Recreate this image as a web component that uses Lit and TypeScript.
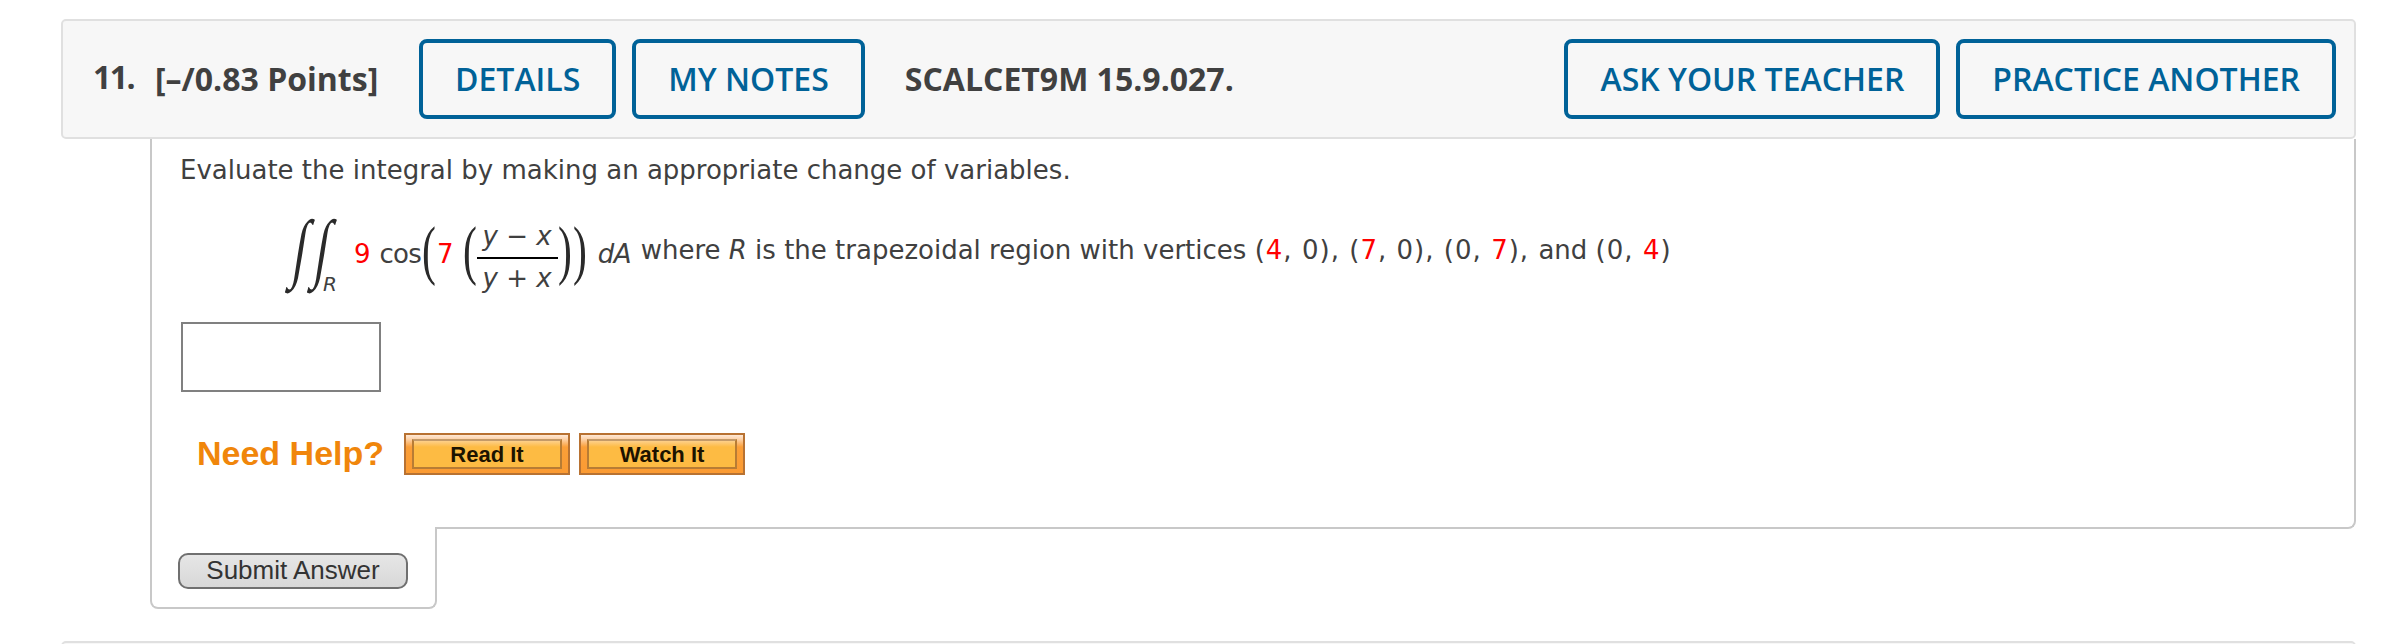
import { LitElement, html, css } from "lit";
import { customElement, property } from "lit/decorators.js";

@customElement("header-button")
class HeaderButton extends LitElement {
  @property() label = "";
  static styles = css`
    :host { display: block; }
    .btn {
      box-sizing: border-box;
      display: block;
      height: 80px;
      margin: 0;
      padding: 0 32px;
      border: 4px solid #006298;
      border-radius: 8px;
      background: #f7f7f7;
      color: #006298;
      font: 600 32px/72px "Open Sans", sans-serif;
      white-space: nowrap;
    }
  `;
  render() {
    return html`<button class="btn">${this.label}</button>`;
  }
}

@customElement("help-button")
class HelpButton extends LitElement {
  @property() label = "";
  static styles = css`
    :host { display: block; }
    .btn {
      box-sizing: border-box;
      display: block;
      width: 166px;
      height: 42px;
      margin: 0;
      padding: 4px 6px;
      border: 2px solid #b87232;
      background: linear-gradient(#fee9d6 0, #fdd3ab 4px, #fb9f38 12px, #fb9b33 100%);
    }
    .face {
      box-sizing: border-box;
      display: block;
      height: 30px;
      border: 2px solid #b87c34;
      border-top-color: #c39a68;
      background: linear-gradient(#fdd08a 0, #fdbb43 6px);
      color: #1c1300;
      font: bold 22px/27px "Liberation Sans", Arial, sans-serif;
      text-align: center;
      white-space: nowrap;
    }
  `;
  render() {
    return html`<button class="btn"><span class="face">${this.label}</span></button>`;
  }
}

@customElement("app-root")
class AppRoot extends LitElement {
  static styles = css`
    :host {
      display: block;
      box-sizing: border-box;
      height: 644px;
      overflow: hidden;
      padding: 19px 32px 0 61px;
      background: #fff;
      color: #404040;
      font: 26px/30px "DejaVu Sans", Verdana, sans-serif;
    }
    .header {
      box-sizing: border-box;
      display: flex;
      align-items: center;
      height: 120px;
      padding: 0 18px 0 31px;
      border: 2px solid #e0e0e0;
      border-radius: 5px;
      background: #f7f7f7;
      font: 700 32px/72px "Open Sans", sans-serif;
      white-space: nowrap;
    }
    .number { width: 62px; margin-left: -1px; padding-bottom: 4px; letter-spacing: -1.6px; }
    .points { width: 264px; }
    .group { display: flex; gap: 16px; }
    .code { flex: 1; padding-left: 40px; }
    .content {
      box-sizing: border-box;
      height: 390px;
      margin-left: 89px;
      padding: 16px 28px 0;
      border: 2px solid #c8c8c8;
      border-top: 0;
      border-radius: 0 0 8px 0;
    }
    .prompt { margin: 0; white-space: nowrap; }
    .math {
      display: flex;
      align-items: flex-start;
      height: 80px;
      margin: 31px 0 0 105px;
      line-height: 76px;
      white-space: nowrap;
    }
    .red { color: #f00; }
    .integral, .paren {
      display: flex;
      justify-content: center;
      align-items: center;
      height: 68px;
      color: #2a2a2a;
      font-family: "Liberation Serif", "Times New Roman", serif;
    }
    .integral { width: 32px; height: 62px; font-size: 68px; }
    .integral span { transform: skewX(-9deg) scale(0.72, 1.12); }
    .second { margin-left: -10px; }
    .paren { width: 12px; font-size: 65px; }
    .paren span { transform: scaleX(0.64); }
    .sub { margin: 57px 0 0 -16px; font-size: 20px; line-height: 22px; }
    .nine { margin-left: 17px; }
    .cos { margin-left: 9px; letter-spacing: -0.7px; }
    .open { margin-left: 2px; }
    .seven { margin-left: 2px; }
    .inner { margin-left: 10px; }
    .fraction {
      display: grid;
      grid-template-rows: 36px 2px 34px;
      width: 81px;
      margin: 5px 0 0 1px;
      line-height: 30px;
      text-align: center;
    }
    .bar { background: #000; }
    .denominator { padding-top: 4px; }
    .close { margin-left: 1px; }
    .outer { margin-left: 3px; }
    .da { margin-left: 12px; width: 43px; letter-spacing: -0.3px; }
    .where { line-height: 68px; }
    .tuple { letter-spacing: 1.02px; }
    .answer {
      box-sizing: border-box;
      display: block;
      width: 200px;
      height: 70px;
      margin: 26px 0 0 1px;
      padding: 0 8px;
      border: 2px solid #808080;
      border-radius: 0;
      background: #fff;
      outline: none;
    }
    .help { display: flex; gap: 9px; margin-top: 41px; }
    .help-title {
      width: 215px;
      padding-left: 17px;
      box-sizing: border-box;
      color: #f0860b;
      font: bold 34px/40px "Liberation Sans", Arial, sans-serif;
      white-space: nowrap;
    }
    .tab {
      box-sizing: border-box;
      width: 287px;
      height: 82px;
      margin: -2px 0 0 89px;
      padding: 26px 26px 0;
      border: 2px solid #c8c8c8;
      border-top: 0;
      border-radius: 0 0 8px 8px;
      background: #fff;
    }
    .submit {
      box-sizing: border-box;
      display: block;
      width: 230px;
      height: 36px;
      margin: 0;
      padding: 0 0 2px;
      border: 2px solid #707070;
      border-radius: 10px;
      background: linear-gradient(#e6e6e6, #d8d8d8);
      color: #333;
      font: 26px/30px "Liberation Sans", Arial, sans-serif;
      white-space: nowrap;
    }
    .next { height: 120px; margin-top: 32px; border: 2px solid #e0e0e0; border-radius: 5px; background: #f7f7f7; }
  `;

  render() {
    const red = (n: number) => html`<span class="red">${n}</span>`;
    return html`
      <div class="header">
        <span class="number">11.</span>
        <span class="points">[–/0.83 Points]</span>
        <div class="group">
          <header-button label="DETAILS"></header-button>
          <header-button label="MY NOTES"></header-button>
        </div>
        <span class="code">SCALCET9M 15.9.027.</span>
        <div class="group">
          <header-button label="ASK YOUR TEACHER"></header-button>
          <header-button label="PRACTICE ANOTHER"></header-button>
        </div>
      </div>
      <div class="content">
        <p class="prompt">Evaluate the integral by making an appropriate change of variables.</p>
        <div class="math">
          <span class="integral"><span>∫</span></span>
          <span class="integral second"><span>∫</span></span>
          <i class="sub">R</i>
          <span class="nine red">9</span>
          <span class="cos">cos</span>
          <span class="paren open"><span>(</span></span>
          <span class="seven red">7</span>
          <span class="paren inner"><span>(</span></span>
          <span class="fraction">
            <i>y − x</i>
            <span class="bar"></span>
            <i class="denominator">y + x</i>
          </span>
          <span class="paren close"><span>)</span></span>
          <span class="paren outer"><span>)</span></span>
          <i class="da">dA</i>
          <span class="where">where <i>R</i> is the trapezoidal region with vertices <span class="tuple">(${red(4)}, 0), (${red(7)}, 0), (0, ${red(7)}), </span>and <span class="tuple">(0, ${red(4)})</span></span>
        </div>
        <input class="answer" type="text" aria-label="Answer" />
        <div class="help">
          <span class="help-title">Need Help?</span>
          <help-button label="Read It"></help-button>
          <help-button label="Watch It"></help-button>
        </div>
      </div>
      <div class="tab"><button class="submit">Submit Answer</button></div>
      <div class="next"></div>
    `;
  }
}
